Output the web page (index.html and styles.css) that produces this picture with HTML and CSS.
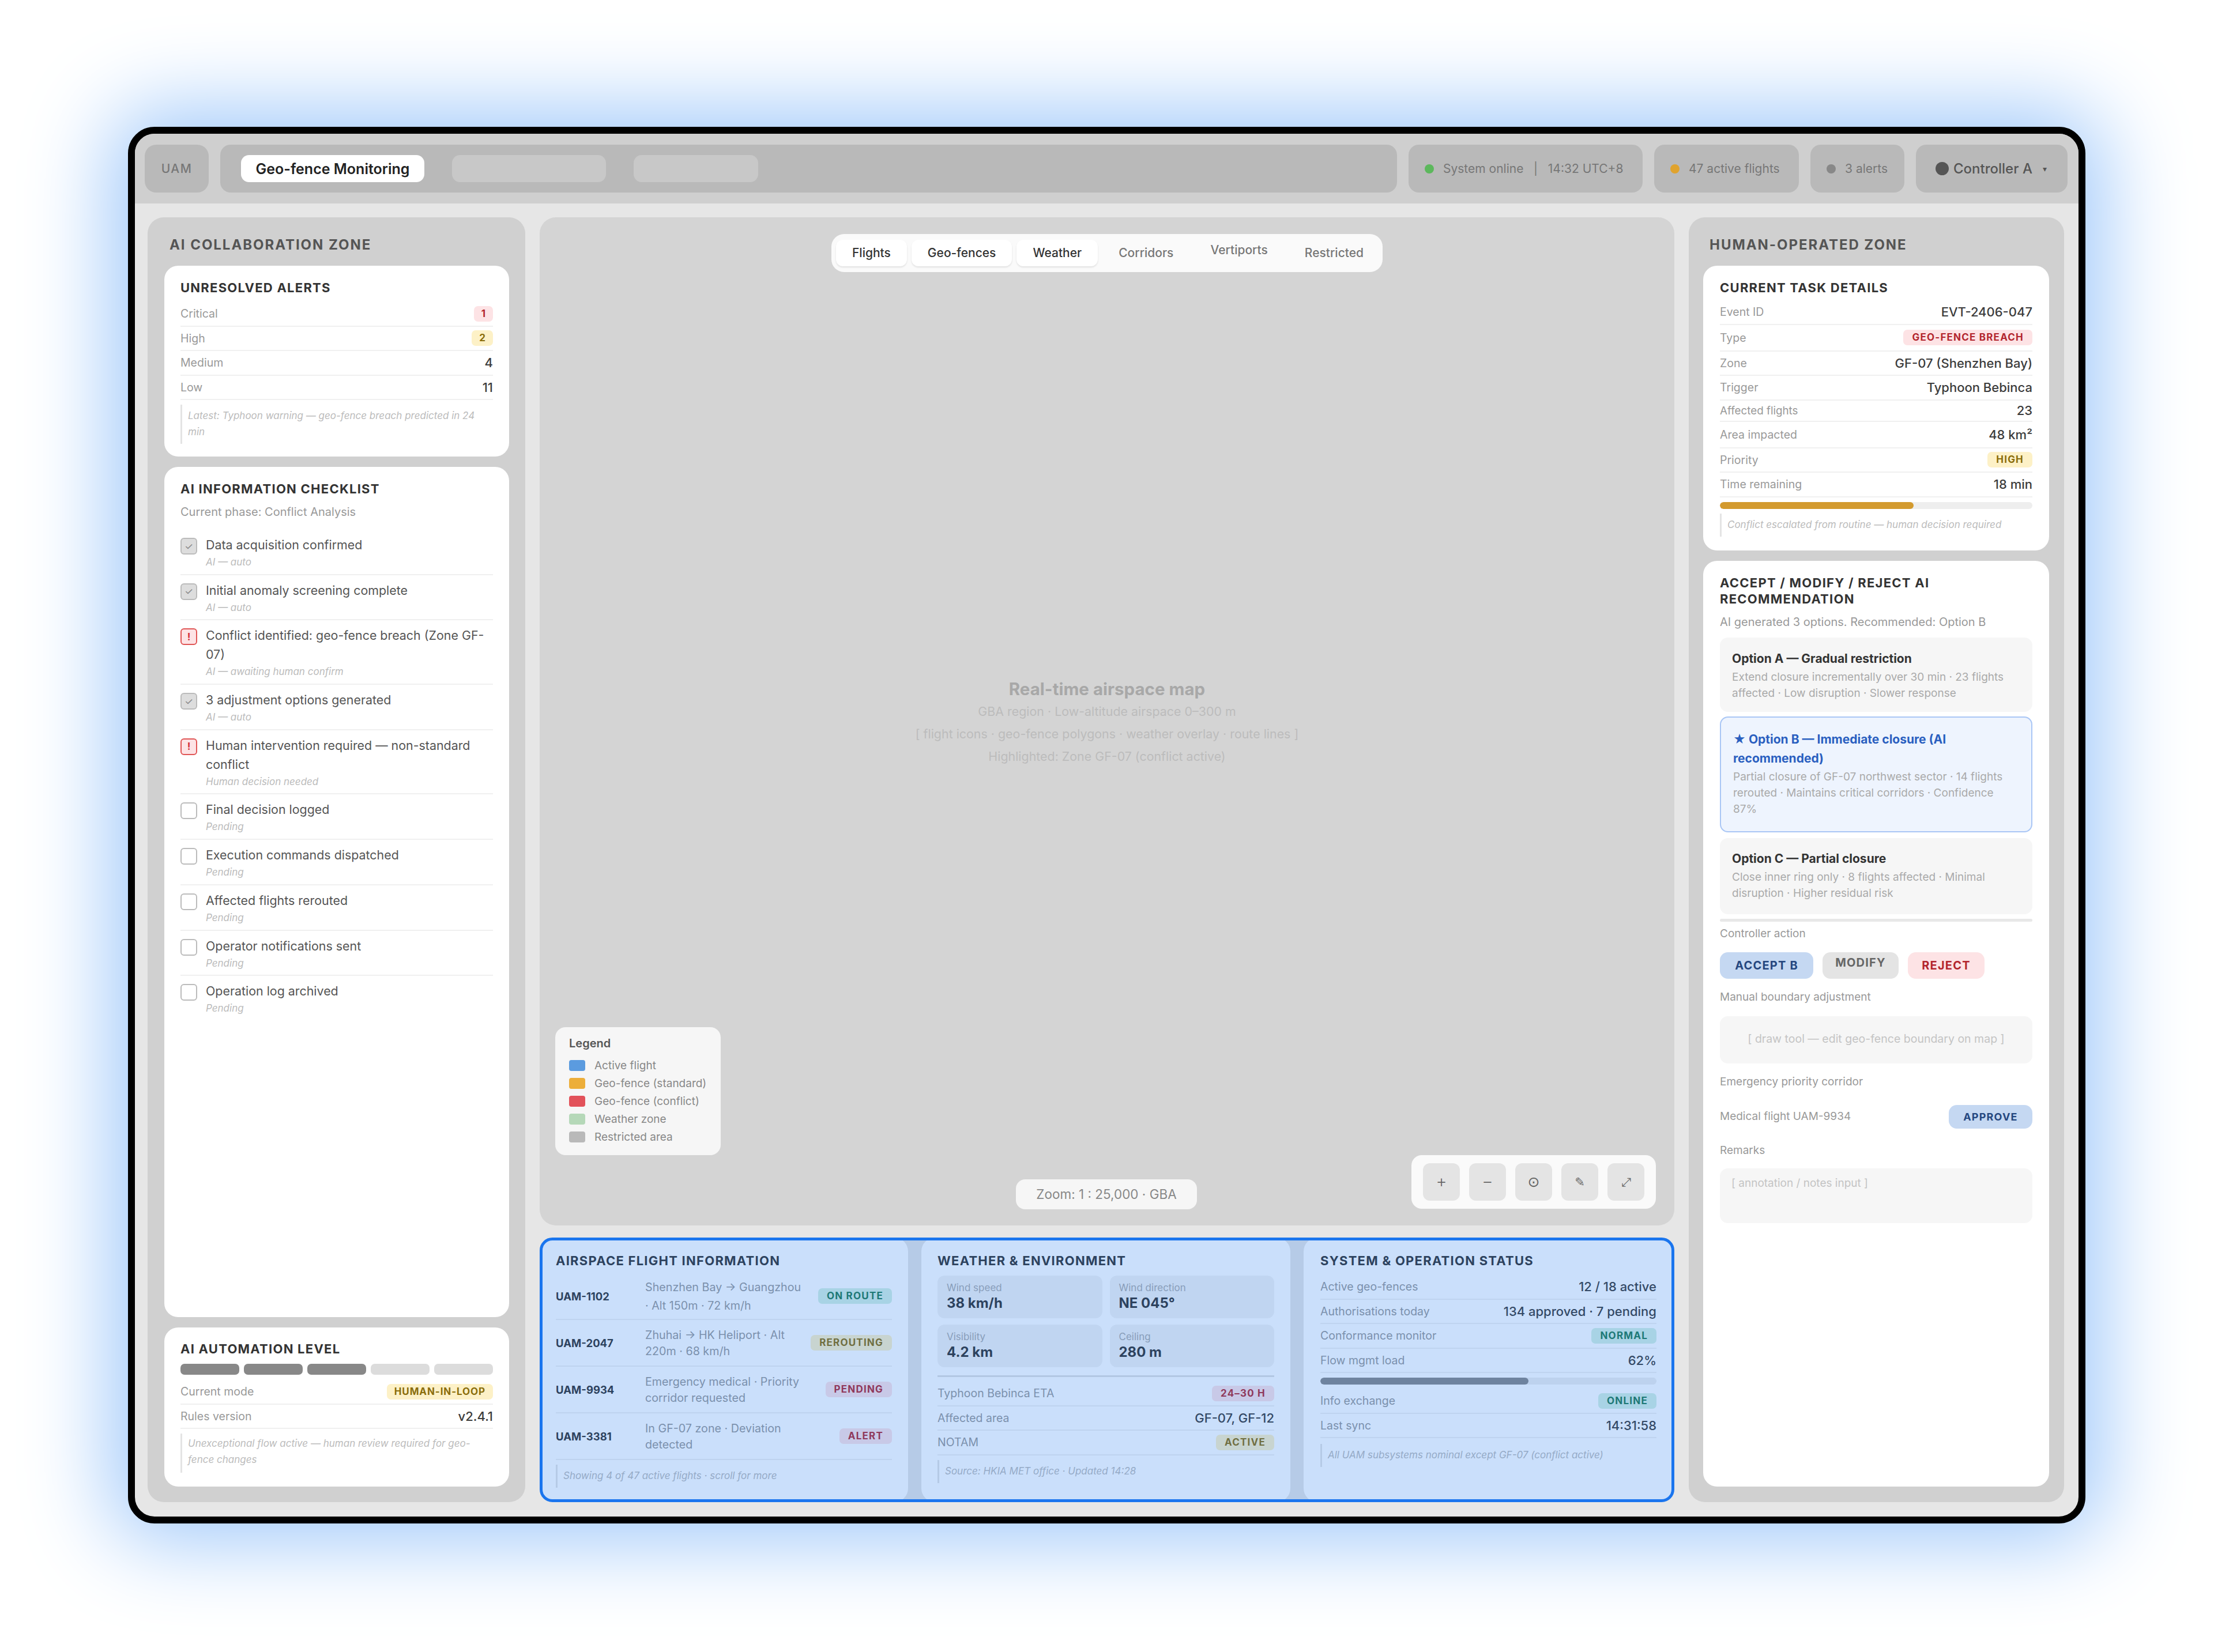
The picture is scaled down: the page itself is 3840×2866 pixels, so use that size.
FILE: index.html
```html
<!DOCTYPE html>
<html lang="en">

<head>
    <meta charset="UTF-8">
    <title>UAM Geo-fence Monitoring</title>
    <link rel="stylesheet" href="styles.css">
</head>

<body>
    <div class="device">
        <header class="topbar">
            <div class="brand">UAM</div>
            <nav class="nav">
                <div class="nav-tab active">Geo-fence Monitoring</div>
                <div class="nav-tab ghost ghost-a"></div>
                <div class="nav-tab ghost ghost-b"></div>
            </nav>
            <div class="pill pill-sys"><span class="dot green"></span>System online &nbsp;&nbsp;|&nbsp;&nbsp; 14:32 UTC+8</div>
            <div class="pill pill-flights"><span class="dot amber"></span>47 active flights</div>
            <div class="pill pill-alerts"><span class="dot grey"></span>3 alerts</div>
            <div class="pill pill-user"><span class="dot user"></span>Controller A<span class="caret">▾</span></div>
        </header>

        <main class="layout">
            <aside class="zone">
                <h2 class="zone-title">AI COLLABORATION ZONE</h2>

                <section class="card card-alerts">
                    <h3 class="card-title">UNRESOLVED ALERTS</h3>
                    <div class="row"><span class="lbl">Critical</span><span class="badge red tiny">1</span></div>
                    <div class="row"><span class="lbl">High</span><span class="badge yellow tiny">2</span></div>
                    <div class="row"><span class="lbl">Medium</span><span class="val">4</span></div>
                    <div class="row"><span class="lbl">Low</span><span class="val">11</span></div>
                    <p class="note">Latest: Typhoon warning — geo-fence breach predicted in 24 min</p>
                </section>

                <section class="card card-check">
                    <h3 class="card-title">AI INFORMATION CHECKLIST</h3>
                    <p class="phase">Current phase: Conflict Analysis</p>
                    <div class="check"><span class="box done">✓</span>
                        <div><div class="check-text">Data acquisition confirmed</div><div class="check-sub">AI — auto</div></div>
                    </div>
                    <div class="check"><span class="box done">✓</span>
                        <div><div class="check-text">Initial anomaly screening complete</div><div class="check-sub">AI — auto</div></div>
                    </div>
                    <div class="check"><span class="box warn">!</span>
                        <div><div class="check-text">Conflict identified: geo-fence breach (Zone GF-07)</div><div class="check-sub">AI — awaiting human confirm</div></div>
                    </div>
                    <div class="check"><span class="box done">✓</span>
                        <div><div class="check-text">3 adjustment options generated</div><div class="check-sub">AI — auto</div></div>
                    </div>
                    <div class="check"><span class="box warn">!</span>
                        <div><div class="check-text">Human intervention required — non-standard conflict</div><div class="check-sub">Human decision needed</div></div>
                    </div>
                    <div class="check"><span class="box"></span>
                        <div><div class="check-text">Final decision logged</div><div class="check-sub">Pending</div></div>
                    </div>
                    <div class="check"><span class="box"></span>
                        <div><div class="check-text">Execution commands dispatched</div><div class="check-sub">Pending</div></div>
                    </div>
                    <div class="check"><span class="box"></span>
                        <div><div class="check-text">Affected flights rerouted</div><div class="check-sub">Pending</div></div>
                    </div>
                    <div class="check"><span class="box"></span>
                        <div><div class="check-text">Operator notifications sent</div><div class="check-sub">Pending</div></div>
                    </div>
                    <div class="check last"><span class="box"></span>
                        <div><div class="check-text">Operation log archived</div><div class="check-sub">Pending</div></div>
                    </div>
                </section>

                <section class="card card-auto">
                    <h3 class="card-title">AI AUTOMATION LEVEL</h3>
                    <div class="levels">
                        <span class="level on"></span><span class="level on"></span><span class="level on"></span>
                        <span class="level"></span><span class="level"></span>
                    </div>
                    <div class="row"><span class="lbl">Current mode</span><span class="badge yellow badge-mode">HUMAN-IN-LOOP</span></div>
                    <div class="row"><span class="lbl">Rules version</span><span class="val">v2.4.1</span></div>
                    <p class="note">Unexceptional flow active — human review required for geo-fence changes</p>
                </section>
            </aside>

            <div class="center">
                <section class="map">
                    <div class="layers">
                        <span class="layer on">Flights</span>
                        <span class="layer on">Geo-fences</span>
                        <span class="layer on">Weather</span>
                        <span class="layer">Corridors</span>
                        <span class="layer raised">Vertiports</span>
                        <span class="layer">Restricted</span>
                    </div>
                    <div class="map-label">
                        <div class="map-title">Real-time airspace map</div>
                        <div>GBA region · Low-altitude airspace 0–300 m</div>
                        <div>[ flight icons · geo-fence polygons · weather overlay · route lines ]</div>
                        <div>Highlighted: Zone GF-07 (conflict active)</div>
                    </div>
                    <div class="map-foot">
                        <div class="legend">
                            <div class="legend-title">Legend</div>
                            <div class="legend-row"><span class="swatch sw-blue"></span>Active flight</div>
                            <div class="legend-row"><span class="swatch sw-amber"></span>Geo-fence (standard)</div>
                            <div class="legend-row"><span class="swatch sw-red"></span>Geo-fence (conflict)</div>
                            <div class="legend-row"><span class="swatch sw-green"></span>Weather zone</div>
                            <div class="legend-row"><span class="swatch sw-grey"></span>Restricted area</div>
                        </div>
                        <div class="zoom-label">Zoom: 1 : 25,000 · GBA</div>
                        <div class="controls">
                            <span class="ctl">+</span>
                            <span class="ctl">−</span>
                            <span class="ctl ctl-target">⊙</span>
                            <span class="ctl">✎</span>
                            <span class="ctl">⤢</span>
                        </div>
                    </div>
                </section>

                <section class="strip">
                    <div class="panel">
                        <h3 class="card-title">AIRSPACE FLIGHT INFORMATION</h3>
                        <div class="flights">
                            <div class="flight"><span class="flight-id">UAM-1102</span><span class="flight-desc">Shenzhen Bay → Guangzhou · Alt 150m · 72 km/h</span><span class="badge green">ON ROUTE</span></div>
                            <div class="flight"><span class="flight-id">UAM-2047</span><span class="flight-desc">Zhuhai → HK Heliport · Alt 220m · 68 km/h</span><span class="badge yellow">REROUTING</span></div>
                            <div class="flight"><span class="flight-id">UAM-9934</span><span class="flight-desc">Emergency medical · Priority corridor requested</span><span class="badge red">PENDING</span></div>
                            <div class="flight"><span class="flight-id">UAM-3381</span><span class="flight-desc">In GF-07 zone · Deviation detected</span><span class="badge red">ALERT</span></div>
                        </div>
                        <p class="note">Showing 4 of 47 active flights · scroll for more</p>
                    </div>
                    <div class="panel">
                        <h3 class="card-title">WEATHER &amp; ENVIRONMENT</h3>
                        <div class="metrics">
                            <div class="metric"><div class="metric-lbl">Wind speed</div><div class="metric-val">38 km/h</div></div>
                            <div class="metric"><div class="metric-lbl">Wind direction</div><div class="metric-val">NE 045°</div></div>
                            <div class="metric"><div class="metric-lbl">Visibility</div><div class="metric-val">4.2 km</div></div>
                            <div class="metric"><div class="metric-lbl">Ceiling</div><div class="metric-val">280 m</div></div>
                        </div>
                        <div class="rule"></div>
                        <div class="row"><span class="lbl">Typhoon Bebinca ETA</span><span class="badge red">24–30 H</span></div>
                        <div class="row"><span class="lbl">Affected area</span><span class="val">GF-07, GF-12</span></div>
                        <div class="row"><span class="lbl">NOTAM</span><span class="badge yellow">ACTIVE</span></div>
                        <p class="note">Source: HKIA MET office · Updated 14:28</p>
                    </div>
                    <div class="panel panel-status">
                        <h3 class="card-title">SYSTEM &amp; OPERATION STATUS</h3>
                        <div class="row"><span class="lbl">Active geo-fences</span><span class="val">12 / 18 active</span></div>
                        <div class="row"><span class="lbl">Authorisations today</span><span class="val">134 approved · 7 pending</span></div>
                        <div class="row"><span class="lbl">Conformance monitor</span><span class="badge green">NORMAL</span></div>
                        <div class="row"><span class="lbl">Flow mgmt load</span><span class="val">62%</span></div>
                        <div class="bar"><div class="bar-fill grey-fill" style="width: 62%"></div></div>
                        <div class="row"><span class="lbl">Info exchange</span><span class="badge green">ONLINE</span></div>
                        <div class="row"><span class="lbl">Last sync</span><span class="val">14:31:58</span></div>
                        <p class="note">All UAM subsystems nominal except GF-07 (conflict active)</p>
                    </div>
                    <div class="strip-overlay"></div>
                </section>
            </div>

            <aside class="zone zone-human">
                <h2 class="zone-title">HUMAN-OPERATED ZONE</h2>

                <section class="card card-task">
                    <h3 class="card-title">CURRENT TASK DETAILS</h3>
                    <div class="row"><span class="lbl">Event ID</span><span class="val">EVT-2406-047</span></div>
                    <div class="row row-tall"><span class="lbl">Type</span><span class="badge red">GEO-FENCE BREACH</span></div>
                    <div class="row"><span class="lbl">Zone</span><span class="val">GF-07 (Shenzhen Bay)</span></div>
                    <div class="row"><span class="lbl">Trigger</span><span class="val">Typhoon Bebinca</span></div>
                    <div class="row row-short"><span class="lbl">Affected flights</span><span class="val">23</span></div>
                    <div class="row row-tall"><span class="lbl">Area impacted</span><span class="val">48 km²</span></div>
                    <div class="row"><span class="lbl">Priority</span><span class="badge yellow">HIGH</span></div>
                    <div class="row"><span class="lbl">Time remaining</span><span class="val">18 min</span></div>
                    <div class="bar"><div class="bar-fill amber-fill" style="width: 62%"></div></div>
                    <p class="note">Conflict escalated from routine — human decision required</p>
                </section>

                <section class="card card-action">
                    <h3 class="card-title">ACCEPT / MODIFY / REJECT AI RECOMMENDATION</h3>
                    <p class="phase">AI generated 3 options. Recommended: Option B</p>
                    <div class="option">
                        <div class="option-title">Option A — Gradual restriction</div>
                        <div class="option-desc">Extend closure incrementally over 30 min · 23 flights affected · Low disruption · Slower response</div>
                    </div>
                    <div class="option picked">
                        <div class="option-title">★ Option B — Immediate closure (AI recommended)</div>
                        <div class="option-desc">Partial closure of GF-07 northwest sector · 14 flights rerouted · Maintains critical corridors · Confidence 87%</div>
                    </div>
                    <div class="option">
                        <div class="option-title">Option C — Partial closure</div>
                        <div class="option-desc">Close inner ring only · 8 flights affected · Minimal disruption · Higher residual risk</div>
                    </div>
                    <div class="divider"></div>
                    <div class="field-lbl">Controller action</div>
                    <div class="actions">
                        <span class="btn btn-blue">ACCEPT B</span>
                        <span class="btn btn-grey">MODIFY</span>
                        <span class="btn btn-red">REJECT</span>
                    </div>
                    <div class="field-lbl">Manual boundary adjustment</div>
                    <div class="drawbox">[ draw tool — edit geo-fence boundary on map ]</div>
                    <div class="field-lbl">Emergency priority corridor</div>
                    <div class="medical"><span class="field-lbl">Medical flight UAM-9934</span><span class="btn btn-blue btn-small">APPROVE</span></div>
                    <div class="field-lbl">Remarks</div>
                    <div class="remarks">[ annotation / notes input ]</div>
                </section>
            </aside>
        </main>
    </div>
</body>

</html>
```

FILE: styles.css
```css
* {
    box-sizing: border-box;
}

body {
    margin: 0;
    height: 2866px;
    padding: 220px 223px 223px 222px;
    background-color: #fff;
    font-family: Inter, "Liberation Sans", sans-serif;
    color: #333;
}

h2,
h3,
p {
    margin: 0;
}

.device {
    height: 100%;
    border: 12px solid #000;
    border-radius: 46px;
    background-color: #e6e6e6;
    box-shadow: 0 0 150px 30px #9fc8fa;
    display: flex;
    flex-direction: column;
    overflow: hidden;
}

/* top bar */
.topbar {
    height: 121px;
    flex: none;
    background-color: #cfcfcf;
    display: flex;
    gap: 20px;
    padding: 19px 19px 19px 17px;
}

.brand {
    width: 111px;
    background-color: #b9b9b9;
    border-radius: 20px;
    display: flex;
    align-items: center;
    justify-content: center;
    font-size: 21px;
    font-weight: 500;
    letter-spacing: 1.5px;
    color: #777;
}

.nav {
    flex: 1;
    background-color: #b9b9b9;
    border-radius: 18px;
    display: flex;
    align-items: center;
    gap: 48px;
    padding: 0 36px;
}

.nav-tab {
    height: 47px;
    border-radius: 14px;
}

.nav-tab.active {
    width: 318px;
    background-color: #fff;
    display: flex;
    align-items: center;
    justify-content: center;
    font-size: 25px;
    font-weight: 600;
    color: #222;
}

.ghost {
    background-color: #c8c8c8;
}

.ghost-a {
    width: 267px;
}

.ghost-b {
    width: 216px;
}

.pill {
    background-color: #b9b9b9;
    border-radius: 18px;
    display: flex;
    align-items: center;
    padding-left: 28px;
    font-size: 21px;
    color: #777;
}

.pill-sys {
    width: 406px;
}

.pill-flights {
    width: 251px;
}

.pill-alerts {
    width: 163px;
}

.pill-user {
    width: 263px;
    padding-left: 34px;
    font-size: 24px;
    font-weight: 500;
    color: #555;
}

.dot {
    width: 16px;
    height: 16px;
    border-radius: 50%;
    margin-right: 16px;
}

.dot.green {
    background-color: #5cb85c;
}

.dot.amber {
    background-color: #e0a32e;
}

.dot.grey {
    background-color: #888;
}

.dot.user {
    width: 23px;
    height: 23px;
    margin-right: 8px;
    background-color: #555;
}

.caret {
    font-size: 14px;
    margin-left: 18px;
}

/* three columns */
.layout {
    flex: 1;
    min-height: 0;
    display: grid;
    grid-template-columns: 655px 1fr 651px;
    gap: 25px;
    padding: 24px 25px 25px 22px;
}

.zone {
    background-color: #d0d0d0;
    border-radius: 28px;
    padding: 30px 28px 27px 29px;
    display: flex;
    flex-direction: column;
    gap: 18px;
}

.zone-human {
    padding-left: 25px;
    padding-right: 26px;
}

.zone-title {
    height: 36px;
    font-size: 24px;
    font-weight: 700;
    letter-spacing: 1.95px;
    color: #555;
    padding-left: 9px;
    line-height: 36px;
}

.zone-human .zone-title {
    padding-left: 11px;
}

.zone-human .card {
    padding-left: 29px;
    padding-right: 29px;
}

.card {
    background-color: #fff;
    border-radius: 24px;
    padding: 24px 28px 22px;
}

.card-title {
    font-size: 22px;
    line-height: 28px;
    font-weight: 700;
    letter-spacing: 1.25px;
    color: #333;
}

.row {
    min-height: 42.5px;
    display: flex;
    align-items: center;
    justify-content: space-between;
    border-bottom: 2px solid #f0f0f0;
}

.lbl {
    font-size: 19.5px;
    color: #999;
}

.val {
    font-size: 22px;
    font-weight: 500;
    color: #3c3c3c;
}

.badge {
    flex: none;
    height: 27px;
    line-height: 27px;
    padding: 0 15px;
    border-radius: 7px;
    font-size: 17px;
    font-weight: 700;
    letter-spacing: 1.2px;
}

.badge.tiny {
    padding: 0 13px;
    letter-spacing: 0;
}

.badge-mode {
    padding: 0 13px;
    letter-spacing: 0.9px;
}

.red {
    background-color: #fde3e5;
    color: #b3262e;
}

.yellow {
    background-color: #fdf1c7;
    color: #8a6d0b;
}

.green {
    background-color: #d3f0e3;
    color: #1f7a52;
}

.note {
    margin-top: 8px;
    padding: 5px 0 7px 10px;
    border-left: 3px solid #e4e4e4;
    font-size: 17px;
    line-height: 28px;
    font-style: italic;
    color: #bbb;
}

.card-alerts .card-title {
    margin-bottom: 11px;
}

/* checklist */
.card-check {
    flex: 1;
    padding-top: 24px;
}

.phase {
    margin-top: 12px;
    margin-bottom: 17px;
    font-size: 20px;
    line-height: 28px;
    color: #999;
}

.check {
    display: flex;
    gap: 15px;
    padding: 10px 0 8.7px;
    border-bottom: 2px solid #f0f0f0;
}

.check.last {
    border-bottom: none;
}

.box {
    flex: none;
    width: 29px;
    height: 29px;
    margin-top: 4px;
    border: 2px solid #bbb;
    border-radius: 6px;
    display: flex;
    align-items: center;
    justify-content: center;
    font-size: 17px;
}

.box.done {
    background-color: #ddd;
    color: #888;
}

.box.warn {
    background-color: #fde3e5;
    border-color: #e05555;
    color: #d32f3a;
    font-weight: 700;
}

.check-text {
    font-size: 21.4px;
    line-height: 33px;
    color: #555;
}

.check-sub {
    margin-top: 1px;
    font-size: 17px;
    line-height: 24px;
    font-style: italic;
    color: #bbb;
}

/* automation */
.card-auto {
    padding-top: 23px;
    padding-bottom: 24px;
}

.card-auto .note {
    padding-top: 3px;
    padding-bottom: 9px;
}

.levels {
    display: flex;
    gap: 8px;
    margin: 12px 0 9px;
}

.level {
    flex: 1;
    height: 19px;
    border-radius: 7px;
    background-color: #dcdcdc;
}

.level.on {
    background-color: #888;
}

/* map */
.center {
    min-width: 0;
    display: flex;
    flex-direction: column;
    gap: 21px;
}

.map {
    position: relative;
    flex: 1;
    background-color: #d4d4d4;
    border-radius: 28px;
    display: flex;
    flex-direction: column;
    align-items: center;
    padding: 29px 32px 29px 27px;
}

.layers {
    height: 66px;
    margin-left: 5px;
    padding: 10px 5px 10px 8px;
    display: flex;
    background-color: #fafafa;
    border-radius: 22px;
    gap: 8px;
}

.layer {
    padding: 0 28px;
    height: 46px;
    line-height: 46px;
    border-radius: 12px;
    font-size: 21px;
    font-weight: 500;
    color: #777;
}

.layer.on {
    background-color: #fff;
    color: #333;
    box-shadow: 0 2px 3px rgba(0, 0, 0, 0.1);
}

.layer.raised {
    height: 36px;
    line-height: 36px;
}

.map-label {
    margin-top: 704px;
    margin-left: 5px;
    text-align: center;
    font-size: 21.4px;
    line-height: 39px;
    color: #bcbcbc;
}

.map-title {
    font-size: 29.5px;
    font-weight: 700;
    color: #a8a8a8;
}

.map-foot {
    margin-top: auto;
    align-self: stretch;
    display: flex;
    align-items: flex-end;
    justify-content: space-between;
}

.legend {
    width: 287px;
    height: 222px;
    margin-bottom: 93px;
    padding: 13px 24px;
    background-color: #f6f6f6;
    border-radius: 18px;
    font-size: 19px;
    color: #888;
}

.legend-title {
    font-size: 20px;
    font-weight: 600;
    line-height: 30px;
    margin-bottom: 8px;
    color: #555;
}

.legend-row {
    height: 31px;
    display: flex;
    align-items: center;
    gap: 16px;
}

.swatch {
    width: 28px;
    height: 19px;
    border-radius: 4px;
}

.sw-blue {
    background-color: #5b9bdf;
}

.sw-amber {
    background-color: #ecae3a;
}

.sw-red {
    background-color: #e2525a;
}

.sw-green {
    background-color: #b5d8b8;
}

.sw-grey {
    background-color: #b9b9b9;
}

.zoom-label {
    position: absolute;
    left: 826px;
    bottom: 28px;
    width: 314px;
    height: 52px;
    background-color: #f6f6f6;
    border-radius: 16px;
    font-size: 22.5px;
    line-height: 52px;
    text-align: center;
    color: #888;
}

.controls {
    height: 93px;
    padding: 14px 20px;
    display: flex;
    gap: 16px;
    background-color: #fafafa;
    border-radius: 18px;
}

.ctl {
    width: 64px;
    height: 65px;
    background-color: #e4e4e4;
    border-radius: 12px;
    display: flex;
    align-items: center;
    justify-content: center;
    font-family: "DejaVu Sans", sans-serif;
    font-size: 21px;
    color: #666;
}

.ctl-target {
    font-size: 25px;
}

/* bottom strip */
.strip {
    position: relative;
    flex: none;
    height: 459px;
    display: grid;
    grid-template-columns: 639px 640px 640px;
    gap: 23px;
}

.panel {
    background-color: #fff;
    border-radius: 24px;
    padding: 26px 28px 0;
}

.panel-status {
    padding-left: 29px;
}

.panel-status .card-title {
    margin-bottom: 11px;
}

.panel-status .note {
    margin-top: 10px;
}

.strip-overlay {
    position: absolute;
    inset: 0;
    border: 5px solid #1a75ee;
    border-radius: 22px;
    background-color: rgba(26, 117, 238, 0.23);
}

.flights {
    margin-top: 8px;
}

.flight {
    height: 81px;
    display: flex;
    align-items: center;
    gap: 16px;
    border-bottom: 2px solid #f0f0f0;
}

.flight-id {
    flex: none;
    width: 139px;
    font-size: 18.5px;
    font-weight: 700;
}

.flight-desc {
    flex: 1;
    max-width: 278px;
    font-size: 19.7px;
    line-height: 28px;
    color: #999;
}

.flight .badge {
    margin-left: auto;
}

.flight:first-child .flight-desc {
    line-height: 32px;
}

.metrics {
    display: grid;
    grid-template-columns: 1fr 1fr;
    gap: 11px 13px;
    margin-top: 12px;
}

.metric {
    height: 74px;
    padding: 9px 16px;
    background-color: #f3f3f3;
    border-radius: 12px;
}

.metric-lbl {
    font-size: 17px;
    line-height: 24px;
    color: #aaa;
}

.metric-val {
    font-size: 24px;
    line-height: 30px;
    font-weight: 700;
    color: #333;
}

.rule {
    height: 3px;
    margin: 14px 0 8px;
    background-color: #e0e0e0;
}

.bar {
    height: 12px;
    margin-top: 8px;
    border-radius: 6px;
    background-color: #eee;
    overflow: hidden;
}

.bar-fill {
    height: 100%;
    border-radius: 6px;
}

.grey-fill {
    background-color: #888;
}

.amber-fill {
    background-color: #d39a2e;
}

.panel .bar+.row {
    margin-top: 8px;
}

/* right column */
.card-task {
    padding-bottom: 24px;
}

.card-task .card-title {
    margin-bottom: 8px;
}

.row-short {
    min-height: 37px;
}

.row-short .lbl {
    font-size: 18.8px;
}

.row-tall {
    min-height: 46px;
}

.card-action {
    flex: 1;
}

.card-action .phase {
    margin-top: 12px;
    margin-bottom: 13px;
}

.option {
    margin-bottom: 8px;
    padding: 20px 21px 18px;
    background-color: #f6f6f6;
    border-radius: 14px;
}

.option-title {
    font-size: 21px;
    line-height: 33px;
    font-weight: 700;
    color: #333;
}

.option-desc {
    margin-top: 2px;
    font-size: 19px;
    line-height: 28px;
    color: #aaa;
}

.option.picked {
    margin-bottom: 10px;
    border: 2px solid #a9c6f5;
    background-color: #eef4fe;
    padding: 21px 21px 24px;
}

.picked+.option {
    padding-top: 19px;
    padding-bottom: 22px;
}

.picked .option-title {
    color: #2a5fc0;
}

.divider {
    height: 5px;
    margin-bottom: 7px;
    border-radius: 3px;
    background-color: #e8e8e8;
}

.field-lbl {
    font-size: 19px;
    line-height: 28px;
    color: #999;
}

.actions {
    display: flex;
    gap: 16px;
    margin: 18px 0 18px;
}

.btn {
    height: 46px;
    line-height: 46px;
    border-radius: 14px;
    text-align: center;
    font-size: 20px;
    font-weight: 700;
    letter-spacing: 1.2px;
}

.btn-blue {
    width: 162px;
    background-color: #c5d8f2;
    color: #25477f;
}

.btn-grey {
    width: 132px;
    background-color: #e4e4e4;
    color: #666;
    line-height: 36px;
}

.btn-red {
    width: 133px;
    background-color: #fde3e5;
    color: #b3262e;
}

.btn-small {
    width: 145px;
    height: 41px;
    line-height: 41px;
    font-size: 18px;
}

.drawbox {
    height: 82px;
    margin: 19px 0 18px;
    background-color: #f6f6f6;
    border-radius: 14px;
    text-align: center;
    line-height: 78px;
    font-size: 19.5px;
    color: #c4c4c4;
}

.medical {
    display: flex;
    align-items: center;
    justify-content: space-between;
    margin: 26px 0 24px;
}

.remarks {
    height: 95px;
    margin-top: 17px;
    padding: 12px 20px;
    background-color: #f6f6f6;
    border-radius: 14px;
    font-size: 19px;
    line-height: 28px;
    color: #c4c4c4;
}
```
